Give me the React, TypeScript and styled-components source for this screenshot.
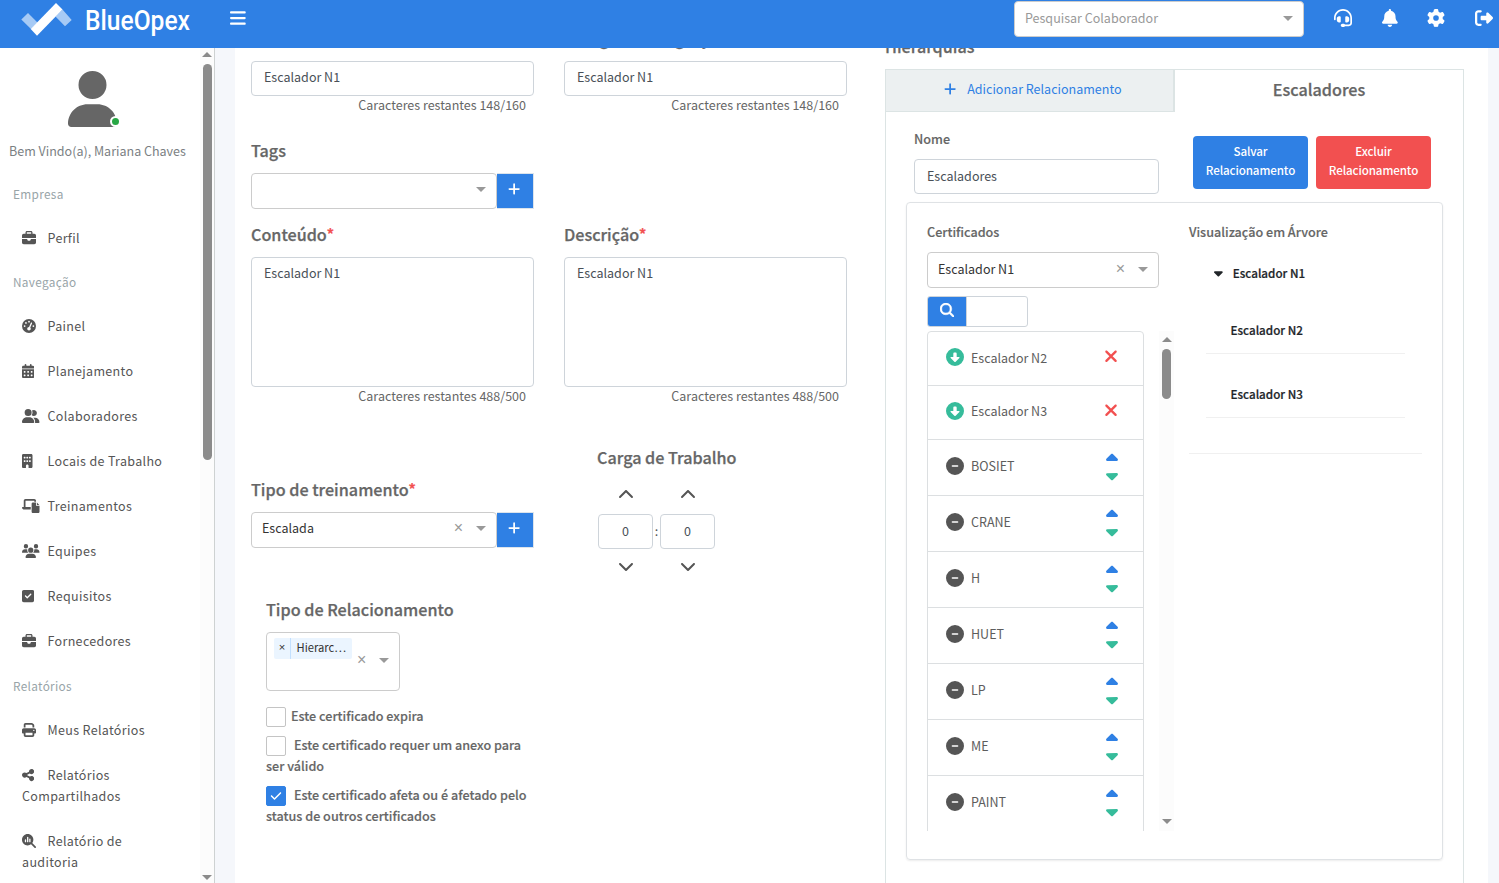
import React from 'react';
import styled, { createGlobalStyle } from 'styled-components';
import {
  FaBars, FaBell, FaBriefcase, FaBuilding, FaCalendarDays, FaCaretDown, FaCaretUp, FaCheck, FaChevronDown,
  FaChevronUp, FaCircleDown, FaCircleMinus, FaGaugeHigh, FaGear, FaHeadset, FaLaptopFile, FaMagnifyingGlass,
  FaMagnifyingGlassChart, FaPlus, FaPrint, FaRightFromBracket, FaShareNodes, FaSquareCheck, FaUser,
  FaUserGroup, FaUsers, FaXmark,
} from 'react-icons/fa6';

const BLUE = '#2f80e4';

const GlobalStyle = createGlobalStyle`
  * { box-sizing: border-box; }
  body {
    margin: 0;
    background: #f5f7fb;
    color: #666;
    font-family: "Noto Sans CJK SC", "Noto Sans", sans-serif;
    font-size: 12.53px;
    line-height: 20px;
    overflow: hidden;
  }
  svg { display: block; flex: none; }
`;

const Page = styled.div`
  height: 883px;
  display: flex;
  flex-direction: column;
  overflow: hidden;
`;

/* An icon at its natural proportions */
const Glyph = styled.span<{ $w: number; $h: number; $c?: string }>`
  display: block;
  flex: none;
  color: ${(p) => p.$c ?? 'inherit'};
  svg {
    width: ${(p) => p.$w}px;
    height: ${(p) => p.$h}px;
  }
`;

/* Top bar */
const Header = styled.header`
  height: 48px;
  flex: none;
  display: flex;
  align-items: flex-start;
  background: ${BLUE};
  color: #fff;
`;
const Brand = styled.div`
  width: 230px;
  padding-left: 20px;
`;
const MenuButton = styled.div`
  padding-top: 8.5px;
  flex: 1;
`;
const HeaderIcons = styled.div`
  display: flex;
  align-items: center;
  justify-content: space-between;
  height: 36px;
  margin: 0 6px 0 30px;
  width: 159px;
`;

/* Form controls */
const Select = styled.div<{ $w: number; $h?: number }>`
  width: ${(p) => p.$w}px;
  height: ${(p) => p.$h ?? 36}px;
  display: flex;
  align-items: center;
  background: #fff;
  border: 1px solid #ccc;
  border-radius: 4px;
  padding: 0 10px;
  color: #333;
`;
const SearchSelect = styled(Select)`
  margin-top: 1px;
`;
const SelectText = styled.span<{ $muted?: boolean }>`
  flex: 1;
  margin-top: -2px;
  color: ${(p) => (p.$muted ? '#999' : '#333')};
`;
const Arrow = styled.i`
  border: 5px solid transparent;
  border-top-color: #999;
  border-bottom-width: 0;
  margin-top: -1px;
`;
const Clear = styled.span`
  color: #999;
  font-family: "Liberation Sans", sans-serif;
  font-size: 16px;
  margin: -3px 13px 0 0;
`;
const Input = styled.div<{ $w?: number }>`
  width: ${(p) => (p.$w ? `${p.$w}px` : '100%')};
  height: 35px;
  padding: 5px 12px;
  border: 1px solid #ced4da;
  border-radius: 4px;
  background: #fff;
  color: #495057;
`;
const TextArea = styled(Input)`
  height: 130px;
`;
const Label = styled.div`
  height: 22px;
  line-height: 20px;
  margin-bottom: 11px;
  font-size: 16.15px;
  font-weight: 500;
  -webkit-text-stroke: 0.25px;
  white-space: nowrap;
`;
const SmallLabel = styled.div`
  margin: -1px 0 10px;
  font-size: 12.62px;
  font-weight: 500;
  -webkit-text-stroke: 0.15px;
  white-space: nowrap;
`;
const Required = styled.span`
  color: #f25050;
`;
const Counter = styled.div`
  text-align: right;
  padding-right: 8px;
  height: 20px;
  line-height: 18px;
`;
const AddButton = styled.div`
  width: 37px;
  height: 36px;
  display: flex;
  justify-content: center;
  padding: 7.5px 1px 0 0;
  color: #fff;
  background: ${BLUE};
  border: 1px solid #dce4ec;
  border-left: 0;
`;
const Inline = styled.div`
  display: flex;
  ${Select} { padding-bottom: 2px; }
`;

/* Sidebar */
const Body = styled.div`
  flex: 1;
  display: flex;
  min-height: 0;
`;
const Sidebar = styled.aside`
  width: 215px;
  flex: none;
  display: flex;
  background: #fff;
  border-right: 1px solid #ced2d2;
`;
const Nav = styled.nav`
  width: 200px;
  overflow: hidden;
`;
const Avatar = styled.div`
  position: relative;
  width: 49px;
  margin: 23px 0 0 67.5px;
  color: #666;
`;
const StatusDot = styled.i`
  position: absolute;
  right: -4px;
  bottom: 0;
  width: 11px;
  height: 11px;
  border: 2px solid #fff;
  border-radius: 50%;
  background: #28a745;
`;
const Greeting = styled.div`
  margin: 14px 0 11px 9px;
  white-space: nowrap;
  color: #7b7f83;
`;
const Section = styled.div<{ $h: number }>`
  height: ${(p) => p.$h}px;
  line-height: ${(p) => p.$h - 1}px;
  padding-left: 13px;
  font-size: 11.8px;
  letter-spacing: 0.33px;
  color: #98a4a8;
`;
const NavItem = styled.div`
  padding: 11px 30px 13px 22px;
  line-height: 21px;
  letter-spacing: 0.33px;
  color: #555;
`;
const NavIcon = styled.span<{ $w: number }>`
  display: inline-block;
  width: 25.5px;
  svg {
    display: inline-block;
    vertical-align: -2px;
    width: ${(p) => p.$w}px;
    height: 14px;
  }
`;
const ScrollTrack = styled.div<{ $w: number; $h: number; $top: number; $bottom: number }>`
  width: ${(p) => p.$w}px;
  height: ${(p) => p.$h}px;
  display: flex;
  flex-direction: column;
  align-items: center;
  padding: ${(p) => p.$top}px 0 ${(p) => p.$bottom}px;
  background: #fcfcfc;
`;
const ScrollThumb = styled.div<{ $h: number }>`
  width: 9px;
  height: ${(p) => p.$h}px;
  margin: 7px 0 auto;
  border-radius: 5px;
  background: #8b8b8b;
`;
const ScrollArrow = styled.i<{ $up?: boolean }>`
  border: 5px solid transparent;
  ${(p) => (p.$up ? 'border-top-width: 0; border-bottom-color' : 'border-bottom-width: 0; border-top-color')}: #8b8b8b;
`;

/* Main card */
const Card = styled.main`
  width: 1253px;
  margin-left: 20px;
  padding-left: 16px;
  display: flex;
  align-items: flex-start;
  background: #fff;
  overflow: hidden;
`;
const Form = styled.section`
  width: 596px;
  margin: -20px 38px 0 0;
  flex: none;
`;
const Pair = styled.div`
  display: grid;
  grid-template-columns: 283px 283px;
  column-gap: 30px;
`;
const TagsField = styled.div`
  margin: 24px 0 15px;
`;
const TypeRow = styled.div`
  display: flex;
  margin-top: 40px;
`;
const TypeField = styled.div`
  width: 346px;
  padding-top: 32px;
`;
const Workload = styled.div`
  width: 160px;
`;
const TimeGrid = styled.div`
  display: grid;
  grid-template-columns: 55px 7px 55px;
  justify-items: center;
  align-items: center;
  margin: 18px 0 0 1px;
  color: #555;
`;
const TimeBox = styled(Input)`
  text-align: center;
  padding: 6px 0;
  margin: 11px 0 9px;
`;
const Relation = styled.div`
  margin: 25px 0 0 15px;
`;
const MultiSelect = styled(Select)`
  padding: 0 10px 1px 7px;
  margin-bottom: 14px;
`;
const Chip = styled.span`
  display: flex;
  flex: none;
  align-self: flex-start;
  width: 78px;
  height: 21px;
  margin: 5px 5px 0 0;
  font-size: 11.2px;
  line-height: 19px;
  border-radius: 2px;
  background: #ebf5ff;
  white-space: nowrap;
`;
const ChipRemove = styled.span`
  width: 17px;
  font-family: "Liberation Sans", sans-serif;
  text-align: center;
  border-right: 1px solid #c2e0ff;
  margin-right: 5.5px;
`;
const CheckRow = styled.div<{ $gap: number }>`
  width: 270px;
  line-height: 21px;
  font-size: 12.62px;
  font-weight: 500;
  -webkit-text-stroke: 0.15px;
  margin-bottom: ${(p) => p.$gap}px;
`;
const CheckBox = styled.span<{ $on?: boolean; $gap: number }>`
  position: relative;
  top: 2px;
  display: inline-flex;
  align-items: center;
  justify-content: center;
  width: 20px;
  height: 20px;
  margin-right: ${(p) => p.$gap}px;
  vertical-align: top;
  border: 1px solid ${(p) => (p.$on ? BLUE : '#c4c4c4')};
  border-radius: 2px;
  background: ${(p) => (p.$on ? BLUE : '#fff')};
  color: #fff;
`;

/* Hierarchy panel */
const Hierarchy = styled.section`
  width: 579px;
  margin-top: -12px;
  flex: none;
`;
const Tabs = styled.div`
  display: flex;
  height: 43px;
`;
const AddTab = styled.div`
  width: 290px;
  display: flex;
  align-items: center;
  justify-content: center;
  gap: 10.5px;
  padding: 0 0 3px 7px;
  background: #ecf0f1;
  border: 1px solid #dce4e4;
  border-right-width: 2px;
  color: ${BLUE};
`;
const ActiveTab = styled.div`
  flex: 1;
  border: 1px solid #dce4e4;
  border-width: 1px 1px 0 0;
  text-align: center;
  font-size: 16.15px;
  font-weight: 500;
  -webkit-text-stroke: 0.25px;
  line-height: 38px;
`;
const Panel = styled.div`
  height: 800px;
  border: 1px solid #dce4e4;
  border-top: 0;
  padding: 18px 20px 0;
`;
const NameRow = styled.div`
  display: flex;
  padding-left: 8px;
  height: 72px;
`;
const NameField = styled.div`
  width: 245px;
  margin-right: 34px;
  ${Input} { padding-top: 6px; }
`;
const ActionButton = styled.div<{ $c: string }>`
  width: 115px;
  height: 53px;
  margin: 6px 8px 0 0;
  padding-top: 6px;
  border-radius: 4px;
  background: ${(p) => p.$c};
  color: #fff;
  font-size: 11.6px;
  letter-spacing: -0.1px;
  font-weight: 500;
  line-height: 19px;
  text-align: center;
`;
const TreeCard = styled.div`
  display: flex;
  width: 537px;
  height: 658px;
  padding: 20px;
  border: 1px solid #dfe2e5;
  border-radius: 4px;
  box-shadow: 0 1px 2px rgba(0, 0, 0, 0.08);
`;
const Certificates = styled.div`
  width: 262px;
  flex: none;
`;
const SearchGroup = styled.div`
  display: flex;
  width: 101px;
  height: 31px;
  margin: 8px 0 4px;
  border: 1px solid #ced4da;
  border-radius: 3px;
  overflow: hidden;
`;
const SearchButton = styled.div`
  width: 39px;
  padding: 5.5px 0 0 11.5px;
  background: ${BLUE};
  color: #fff;
  stroke: #fff;
  border-right: 1px solid #ced4da;
`;
const ListArea = styled.div`
  display: flex;
  width: 247px;
  height: 500px;
  justify-content: space-between;
  overflow: hidden;
`;
const List = styled.div`
  width: 217px;
  height: 560px;
  border: 1px solid #dcdfe1;
  border-radius: 4px 4px 0 0;
`;
const RowName = styled.span`
  flex: 1;
  margin-left: 7.5px;
`;
const ListRow = styled.div<{ $h: number }>`
  height: ${(p) => p.$h}px;
  display: flex;
  align-items: center;
  padding: 0 25px 4px 17.5px;
  border-bottom: 1px solid #dcdfe1;
  color: #5d5d5d;
  &:first-child ${RowName} { margin-top: 2px; }
`;
const Sorter = styled.span`
  margin-top: 2px;
  span + span { margin-top: -2px; }
`;
const Tree = styled.div`
  width: 233px;
  height: 231px;
  border-bottom: 1px solid #f0f0f0;
`;
const TreeRoot = styled.div`
  display: flex;
  align-items: center;
  gap: 10px;
  margin: 21px 0 0 25px;
  font-size: 11.65px;
  font-weight: 500;
  -webkit-text-stroke: 0.2px;
  color: #212529;
`;
const TreeLeaf = styled.div<{ $h: number }>`
  width: 199px;
  height: ${(p) => p.$h}px;
  margin-left: 17px;
  padding: ${(p) => p.$h - 34}px 0 0 24.5px;
  border-bottom: 1px solid #f0f0f0;
  font-size: 11.65px;
  font-weight: 500;
  -webkit-text-stroke: 0.2px;
  color: #212529;
`;

const mainItems = [
  { icon: FaGaugeHigh, width: 14, text: 'Painel' },
  { icon: FaCalendarDays, width: 12.25, text: 'Planejamento' },
  { icon: FaUserGroup, width: 17.5, text: 'Colaboradores' },
  { icon: FaBuilding, width: 10.5, text: 'Locais de Trabalho' },
  { icon: FaLaptopFile, width: 17.5, text: 'Treinamentos' },
  { icon: FaUsers, width: 17.5, text: 'Equipes' },
  { icon: FaSquareCheck, width: 12.25, text: 'Requisitos' },
  { icon: FaBriefcase, width: 14, text: 'Fornecedores' },
];
const reportItems = [
  { icon: FaPrint, width: 14, text: 'Meus Relatórios' },
  { icon: FaShareNodes, width: 12.25, text: 'Relatórios Compartilhados' },
  { icon: FaMagnifyingGlassChart, width: 14, text: 'Relatório de auditoria' },
];

const NavLink = ({ icon: Icon, width, text }: { icon: React.ComponentType; width: number; text: string }) => (
  <NavItem><NavIcon $w={width}><Icon /></NavIcon>{text}</NavItem>
);

const Logo = () => (
  <svg width="180" height="46" viewBox="0 0 180 46">
    <path d="M1.3 19.500 8 13 17.500 22.500 11 29ZM35.500 16.500 42.500 9.500 51.700 20 45 26.300Z" fill="#a6caf5" />
    <path d="M10.700 29 36 3 42.500 9.500 17 35.700Z" fill="#fff" />
    <text x="65" y="30.300" textLength="105" lengthAdjust="spacingAndGlyphs" fill="#fff" fontFamily="Roboto" fontSize="27" fontWeight="500">BlueOpex</text>
  </svg>
);

const PlusIcon = () => <Glyph $w={12.25} $h={14}><FaPlus /></Glyph>;

export default function App() {
  return (
    <Page>
      <GlobalStyle />
      <Header>
        <Brand><Logo /></Brand>
        <MenuButton><Glyph $w={15.75} $h={18}><FaBars /></Glyph></MenuButton>
        <SearchSelect $w={290}>
          <SelectText $muted>Pesquisar Colaborador</SelectText><Arrow />
        </SearchSelect>
        <HeaderIcons>
          <Glyph $w={18} $h={18}><FaHeadset /></Glyph>
          <Glyph $w={15.75} $h={18}><FaBell /></Glyph>
          <Glyph $w={18} $h={18}><FaGear /></Glyph>
          <Glyph $w={18} $h={18}><FaRightFromBracket /></Glyph>
        </HeaderIcons>
      </Header>
      <Body>
        <Sidebar>
          <Nav>
            <Avatar><Glyph $w={49} $h={56}><FaUser /></Glyph><StatusDot /></Avatar>
            <Greeting>Bem Vindo(a), Mariana Chaves</Greeting>
            <Section $h={44}>Empresa</Section>
            <NavLink icon={FaBriefcase} width={14} text="Perfil" />
            <Section $h={43}>Navegação</Section>
            {mainItems.map((i) => <NavLink key={i.text} {...i} />)}
            <Section $h={44}>Relatórios</Section>
            {reportItems.map((i) => <NavLink key={i.text} {...i} />)}
          </Nav>
          <ScrollTrack $w={14} $h={835} $top={4} $bottom={3}><ScrollArrow $up /><ScrollThumb $h={396} /><ScrollArrow /></ScrollTrack>
        </Sidebar>
        <Card>
          <Form>
            <Pair>
              <div><Label>Nome</Label><Input>Escalador N1</Input><Counter>Caracteres restantes 148/160</Counter></div>
              <div><Label>Código de Integração</Label><Input>Escalador N1</Input><Counter>Caracteres restantes 148/160</Counter></div>
            </Pair>
            <TagsField>
              <Label>Tags</Label>
              <Inline><Select $w={246}><SelectText /><Arrow /></Select><AddButton><PlusIcon /></AddButton></Inline>
            </TagsField>
            <Pair>
              <div><Label>Conteúdo<Required>*</Required></Label><TextArea>Escalador N1</TextArea><Counter>Caracteres restantes 488/500</Counter></div>
              <div><Label>Descrição<Required>*</Required></Label><TextArea>Escalador N1</TextArea><Counter>Caracteres restantes 488/500</Counter></div>
            </Pair>
            <TypeRow>
              <TypeField>
                <Label>Tipo de treinamento<Required>*</Required></Label>
                <Inline>
                  <Select $w={246}><SelectText>Escalada</SelectText><Clear>×</Clear><Arrow /></Select>
                  <AddButton><PlusIcon /></AddButton>
                </Inline>
              </TypeField>
              <Workload>
                <Label>Carga de Trabalho</Label>
                <TimeGrid>
                  <FaChevronUp size={16} /><span /><FaChevronUp size={16} />
                  <TimeBox>0</TimeBox><span>:</span><TimeBox>0</TimeBox>
                  <FaChevronDown size={16} /><span /><FaChevronDown size={16} />
                </TimeGrid>
              </Workload>
            </TypeRow>
            <Relation>
              <Label>Tipo de Relacionamento</Label>
              <MultiSelect $w={134} $h={59}>
                <Chip><ChipRemove>×</ChipRemove>Hierarc…</Chip><Clear>×</Clear><Arrow />
              </MultiSelect>
              <CheckRow $gap={8}><CheckBox $gap={5} />Este certificado expira</CheckRow>
              <CheckRow $gap={8}><CheckBox $gap={8} />Este certificado requer um anexo para ser válido</CheckRow>
              <CheckRow $gap={0}><CheckBox $on $gap={8}><FaCheck size={12} /></CheckBox>Este certificado afeta ou é afetado pelo status de outros certificados</CheckRow>
            </Relation>
          </Form>
          <Hierarchy>
            <Label>Hierarquias</Label>
            <Tabs>
              <AddTab><PlusIcon />Adicionar Relacionamento</AddTab>
              <ActiveTab>Escaladores</ActiveTab>
            </Tabs>
            <Panel>
              <NameRow>
                <NameField><SmallLabel>Nome</SmallLabel><Input>Escaladores</Input></NameField>
                <ActionButton $c={BLUE}>Salvar<br />Relacionamento</ActionButton>
                <ActionButton $c="#f25050">Excluir<br />Relacionamento</ActionButton>
              </NameRow>
              <TreeCard>
                <Certificates>
                  <SmallLabel>Certificados</SmallLabel>
                  <Select $w={232}><SelectText>Escalador N1</SelectText><Clear>×</Clear><Arrow /></Select>
                  <SearchGroup><SearchButton><FaMagnifyingGlass size={14.5} strokeWidth={16} /></SearchButton></SearchGroup>
                  <ListArea>
                    <List>
                      {['Escalador N2', 'Escalador N3'].map((n) => (
                        <ListRow key={n} $h={54}>
                          <FaCircleDown size={18} color="#36bc9b" /><RowName>{n}</RowName>
                          <Glyph $w={14} $h={18.5} $c="#f25050"><FaXmark /></Glyph>
                        </ListRow>
                      ))}
                      {['BOSIET', 'CRANE', 'H', 'HUET', 'LP', 'ME', 'PAINT'].map((n) => (
                        <ListRow key={n} $h={56}>
                          <FaCircleMinus size={18} color="#555" /><RowName>{n}</RowName>
                          <Sorter>
                            <Glyph $w={12} $h={19} $c={BLUE}><FaCaretUp /></Glyph>
                            <Glyph $w={12} $h={19} $c="#36bc9b"><FaCaretDown /></Glyph>
                          </Sorter>
                        </ListRow>
                      ))}
                    </List>
                    <ScrollTrack $w={15} $h={500} $top={6} $bottom={7}><ScrollArrow $up /><ScrollThumb $h={50} /><ScrollArrow /></ScrollTrack>
                  </ListArea>
                </Certificates>
                <Tree>
                  <SmallLabel>Visualização em Árvore</SmallLabel>
                  <TreeRoot><Glyph $w={8.75} $h={14}><FaCaretDown /></Glyph>Escalador N1</TreeRoot>
                  <TreeLeaf $h={71}>Escalador N2</TreeLeaf>
                  <TreeLeaf $h={64}>Escalador N3</TreeLeaf>
                </Tree>
              </TreeCard>
            </Panel>
          </Hierarchy>
        </Card>
      </Body>
    </Page>
  );
}
